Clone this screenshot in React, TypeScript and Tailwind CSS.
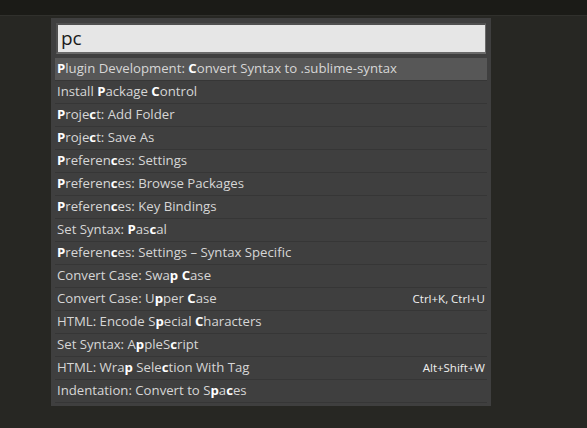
import React from "react";

type Item = { parts: [string, boolean][]; shortcut?: string };

const b = (s: string): [string, boolean] => [s, true];
const n = (s: string): [string, boolean] => [s, false];

const items: Item[] = [
  { parts: [b("P"), n("lugin Development: "), b("C"), n("onvert Syntax to .sublime-syntax")] },
  { parts: [n("Install "), b("P"), n("ackage "), b("C"), n("ontrol")] },
  { parts: [b("P"), n("roje"), b("c"), n("t: Add Folder")] },
  { parts: [b("P"), n("roje"), b("c"), n("t: Save As")] },
  { parts: [b("P"), n("referen"), b("c"), n("es: Settings")] },
  { parts: [b("P"), n("referen"), b("c"), n("es: Browse Packages")] },
  { parts: [b("P"), n("referen"), b("c"), n("es: Key Bindings")] },
  { parts: [n("Set Syntax: "), b("P"), n("as"), b("c"), n("al")] },
  { parts: [b("P"), n("referen"), b("c"), n("es: Settings – Syntax Specific")] },
  { parts: [n("Convert Case: Swa"), b("p"), n(" "), b("C"), n("ase")] },
  { parts: [n("Convert Case: U"), b("p"), n("per "), b("C"), n("ase")], shortcut: "Ctrl+K, Ctrl+U" },
  { parts: [n("HTML: Encode S"), b("p"), n("ecial "), b("C"), n("haracters")] },
  { parts: [n("Set Syntax: A"), b("p"), n("pleS"), b("c"), n("ript")] },
  { parts: [n("HTML: Wra"), b("p"), n(" Sele"), b("c"), n("tion With Tag")], shortcut: "Alt+Shift+W" },
  { parts: [n("Indentation: Convert to S"), b("p"), n("a"), b("c"), n("es")] },
];

export default function App() {
  return (
    <div
      className="w-[587px] h-[428px] bg-[#272723] overflow-hidden flex flex-col"
      style={{ fontFamily: '"Open Sans", "Noto Sans", sans-serif' }}
    >
      <div className="h-[16px] bg-[#1b1b17] border-b border-[#30302c] shrink-0" />
      <div className="pl-[51px] pt-[2px]">
        <div className="w-[440px] bg-[#3f3f3f] pt-[5px] pb-[3px] px-[4px] flex flex-col">
          <div className="mx-[1px] h-[31px] bg-[#e6e6e6] border-t-2 border-l-2 border-[#505050] border-b-2 border-b-[#6a6a6a] border-r border-r-[#6a6a6a] flex items-center pl-[3px] text-[19px] text-[#1b1b1b] leading-none">
            pc
          </div>
          <div className="mt-[4px] flex flex-col">
            {items.map((it, i) => (
              <div
                key={i}
                className={`h-[23px] flex items-center justify-between pl-[2px] pr-[2px] border-b border-[#363636] text-[13.2px] text-[#d6d6d6] ${
                  i === 0 ? "bg-[#575757]" : ""
                }`}
              >
                <span className="whitespace-nowrap">
                  {it.parts.map(([t, bold], j) =>
                    bold ? (
                      <span key={j} className="font-bold text-white">
                        {t}
                      </span>
                    ) : (
                      <span key={j}>{t}</span>
                    )
                  )}
                </span>
                {it.shortcut && (
                  <span className="text-[11.5px] text-[#f0f0f0] whitespace-nowrap">{it.shortcut}</span>
                )}
              </div>
            ))}
          </div>
        </div>
      </div>
    </div>
  );
}
